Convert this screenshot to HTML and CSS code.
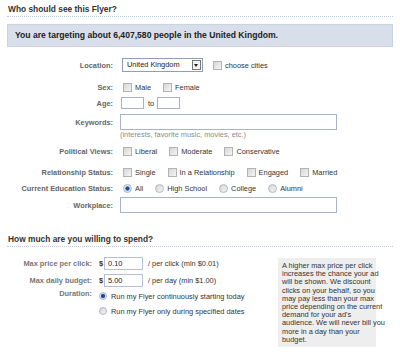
FILE: index.html
```html
<!DOCTYPE html>
<html lang="en">
<head>
    <meta charset="UTF-8">
    <title>Flyer targeting</title>
    <link rel="stylesheet" href="styles.css">
</head>
<body>
    <div class="page">
        <h2 class="section-title">Who should see this Flyer?</h2>
        <div class="estimate">You are targeting about 6,407,580 people in the United Kingdom.</div>

        <div class="form targeting">
            <div class="row r-location">
                <div class="label">Location:</div>
                <div class="field">
                    <div class="select">United Kingdom<span class="arrow"></span></div>
                    <span class="check"></span><span class="opt">choose cities</span>
                </div>
            </div>
            <div class="row r-sex">
                <div class="label">Sex:</div>
                <div class="field">
                    <span class="check"></span><span class="opt">Male</span>
                    <span class="check"></span><span class="opt">Female</span>
                </div>
            </div>
            <div class="row r-age">
                <div class="label">Age:</div>
                <div class="field">
                    <span class="box small"></span><span class="to">to</span><span class="box small"></span>
                </div>
            </div>
            <div class="row r-keywords">
                <div class="label">Keywords:</div>
                <div class="field"><span class="box wide"></span></div>
            </div>
            <div class="row r-hint">
                <div class="label"></div>
                <div class="field hint">(interests, favorite music, movies, etc.)</div>
            </div>
            <div class="row r-political">
                <div class="label">Political Views:</div>
                <div class="field">
                    <span class="check"></span><span class="opt">Liberal</span>
                    <span class="check"></span><span class="opt">Moderate</span>
                    <span class="check"></span><span class="opt">Conservative</span>
                </div>
            </div>
            <div class="row r-relationship">
                <div class="label">Relationship Status:</div>
                <div class="field">
                    <span class="check"></span><span class="opt">Single</span>
                    <span class="check"></span><span class="opt">In a Relationship</span>
                    <span class="check"></span><span class="opt">Engaged</span>
                    <span class="check"></span><span class="opt">Married</span>
                </div>
            </div>
            <div class="row r-education">
                <div class="label">Current Education Status:</div>
                <div class="field">
                    <span class="radio on"></span><span class="opt">All</span>
                    <span class="radio"></span><span class="opt">High School</span>
                    <span class="radio"></span><span class="opt">College</span>
                    <span class="radio"></span><span class="opt">Alumni</span>
                </div>
            </div>
            <div class="row r-workplace">
                <div class="label">Workplace:</div>
                <div class="field"><span class="box wide"></span></div>
            </div>
        </div>

        <h2 class="section-title spend">How much are you willing to spend?</h2>

        <div class="spend-body">
            <div class="form budget">
                <div class="row r-price">
                    <div class="label">Max price per click:</div>
                    <div class="field">
                        <span class="dollar">$</span><span class="box money">0.10</span>
                        <span class="unit">/ per click (min $0.01)</span>
                    </div>
                </div>
                <div class="row r-daily">
                    <div class="label">Max daily budget:</div>
                    <div class="field">
                        <span class="dollar">$</span><span class="box money">5.00</span>
                        <span class="unit">/ per day (min $1.00)</span>
                    </div>
                </div>
                <div class="row r-duration">
                    <div class="label">Duration:</div>
                    <div class="field">
                        <span class="radio on"></span><span class="opt">Run my Flyer continuously starting today</span>
                    </div>
                </div>
                <div class="row r-dates">
                    <div class="label"></div>
                    <div class="field">
                        <span class="radio"></span><span class="opt">Run my Flyer only during specified dates</span>
                    </div>
                </div>
            </div>
            <p class="tip">A higher max price per click<br>increases the chance your ad<br>will be shown. We discount<br>clicks on your behalf, so you<br>may pay less than your max<br>price depending on the current<br>demand for your ad's<br>audience. We will never bill you<br>more in a day than your<br>budget.</p>
        </div>
    </div>
</body>
</html>
```

FILE: styles.css
```css
* {
    margin: 0;
    padding: 0;
    box-sizing: border-box;
}

body {
    background-color: white;
    font-family: 'Liberation Sans', Arial, sans-serif;
    font-size: 7.4px;
    color: #333;
}

.page {
    padding: 4px 7px 0 7px;
}

.section-title {
    font-size: 8.4px;
    line-height: 10px;
    font-weight: bold;
    color: #333;
    padding: 0 0 2px 1px;
    border-bottom: 1px dotted #c3cadb;
}

.estimate {
    margin-top: 7px;
    height: 23px;
    line-height: 21px;
    padding-left: 7px;
    background-color: #d8dfea;
    border: 1px solid #cbd3e3;
    font-size: 8.6px;
    font-weight: bold;
    color: #222;
}

.row {
    display: flex;
    align-items: center;
}

.label {
    flex: none;
    text-align: right;
    font-weight: bold;
    color: #666;
}

.targeting .label {
    width: 106px;
    margin-right: 7px;
}

.field {
    display: flex;
    align-items: center;
    white-space: nowrap;
}

.select {
    position: relative;
    width: 81px;
    height: 14px;
    line-height: 12px;
    margin-left: 2px;
    padding-left: 4px;
    border: 1px solid #8e9fbb;
    color: #222;
}

.arrow {
    position: absolute;
    right: 1px;
    top: 1px;
    width: 9px;
    height: 10px;
    border: 1px solid #777;
    background-color: #f2f2f2;
}

.arrow::after {
    content: "";
    position: absolute;
    left: 1px;
    top: 3px;
    border-left: 2.5px solid transparent;
    border-right: 2.5px solid transparent;
    border-top: 3px solid #222;
}

.check,
.radio {
    width: 9px;
    height: 9px;
    border: 1px solid #b3b3b3;
    background: linear-gradient(135deg, #d6d6d6, #f5f5f5);
    margin-left: 3px;
    margin-right: 3px;
    flex: none;
}

.select + .check {
    margin-left: 10px;
}

.radio {
    border-radius: 50%;
    border-color: #b0b6c2;
}

.radio.on {
    background: radial-gradient(circle, #1d4e9e 0 1.8px, #dfe5ef 2.4px);
}

.opt {
    margin-right: 9px;
}

.box {
    display: block;
    height: 12px;
    border: 1px solid #a8b3cb;
    background-color: white;
}

.box.small {
    width: 23px;
}

.to {
    margin: 0 3px 0 4px;
}

.targeting .box.small:first-child {
    margin-left: 1px;
}

.box.wide {
    width: 217px;
    height: 16px;
}

.hint {
    color: #8b8b8b;
}

.r-location { margin-top: 11px; height: 14px; }
.r-sex { margin-top: 10px; height: 10px; }
.r-age { margin-top: 5px; height: 12px; }
.r-keywords { margin-top: 5px; height: 16px; }
.r-hint { margin-top: 0; height: 9px; }
.r-political { margin-top: 7px; height: 10px; }
.r-relationship { margin-top: 11px; height: 10px; }
.r-education { margin-top: 6px; height: 10px; }
.r-workplace { margin-top: 4px; height: 16px; }

.section-title.spend {
    margin-top: 21px;
}

.spend-body {
    display: flex;
    align-items: flex-start;
}

.budget {
    width: 271px;
}

.budget .label {
    width: 85px;
    margin-right: 7px;
    color: #777;
}

.dollar {
    width: 5px;
    font-weight: bold;
}

.box.money {
    width: 39px;
    height: 13px;
    line-height: 11px;
    padding-left: 3px;
    border-color: #b6bed3;
    color: #222;
}

.unit {
    margin-left: 5px;
}

.budget .radio {
    width: 8px;
    height: 8px;
    margin-left: 0;
    margin-right: 4px;
}

.r-price { margin-top: 10px; height: 13px; }
.r-daily { margin-top: 4px; height: 13px; }
.r-duration { margin-top: 4px; height: 10px; }
.r-duration .label { align-self: flex-start; line-height: 6px; }
.r-dates { margin-top: 5px; height: 10px; }

.tip {
    margin-top: 11px;
    width: 98px;
    height: 89px;
    padding: 4px 3px 0 4px;
    background-color: #eeeeee;
    color: #333;
    line-height: 8.2px;
    white-space: nowrap;
}
```
